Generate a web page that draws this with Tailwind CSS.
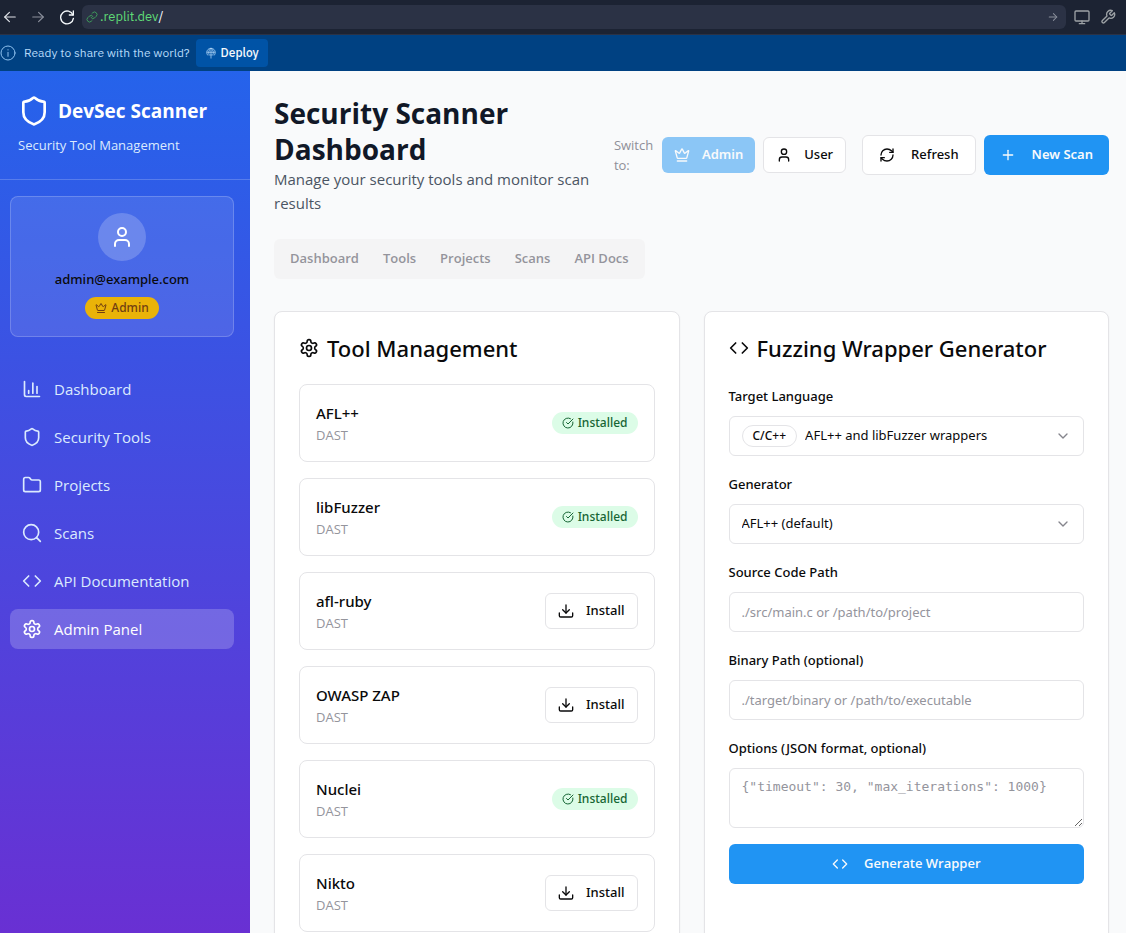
<!DOCTYPE html>
<html lang="en">
<head>
<meta charset="utf-8">
<meta name="viewport" content="width=device-width, initial-scale=1">
<title>DevSec Scanner</title>
<script src="https://cdn.jsdelivr.net/npm/@tailwindcss/browser@4"></script>
</head>
<body class="flex h-screen flex-col overflow-hidden bg-[#f9fafb] font-['Open_Sans','Noto_Sans',sans-serif] text-[#0a0a0b]">

<svg class="hidden" aria-hidden="true">
  <symbol id="i-shield" viewBox="0 0 24 24"><path d="M20 13c0 5-3.5 7.5-7.66 8.95a1 1 0 0 1-.67-.01C7.5 20.5 4 18 4 13V6a1 1 0 0 1 1-1c2 0 4.5-1.2 6.24-2.72a1.17 1.17 0 0 1 1.52 0C14.51 3.81 17 5 19 5a1 1 0 0 1 1 1z"/></symbol>
  <symbol id="i-user" viewBox="0 0 24 24"><path d="M19 21v-2a4 4 0 0 0-4-4H9a4 4 0 0 0-4 4v2"/><circle cx="12" cy="7" r="4"/></symbol>
  <symbol id="i-crown" viewBox="0 0 24 24"><path d="M11.562 3.266a.5.5 0 0 1 .876 0L15.39 8.87a1 1 0 0 0 1.516.294L21.183 5.5a.5.5 0 0 1 .798.519l-2.834 10.246a1 1 0 0 1-.956.734H5.81a1 1 0 0 1-.957-.734L2.02 6.02a.5.5 0 0 1 .798-.519l4.276 3.664a1 1 0 0 0 1.516-.294z"/><path d="M5 21h14"/></symbol>
  <symbol id="i-chart" viewBox="0 0 24 24"><path d="M3 3v16a2 2 0 0 0 2 2h16"/><path d="M18 17V9"/><path d="M13 17V5"/><path d="M8 17v-3"/></symbol>
  <symbol id="i-folder" viewBox="0 0 24 24"><path d="M20 20a2 2 0 0 0 2-2V8a2 2 0 0 0-2-2h-7.9a2 2 0 0 1-1.69-.9L9.6 3.9A2 2 0 0 0 7.93 3H4a2 2 0 0 0-2 2v13a2 2 0 0 0 2 2Z"/></symbol>
  <symbol id="i-search" viewBox="0 0 24 24"><circle cx="11" cy="11" r="9"/><path d="m22 22-4.5-4.5"/></symbol>
  <symbol id="i-code" viewBox="0 0 24 24"><path d="m16 18 6-6-6-6"/><path d="m8 6-6 6 6 6"/></symbol>
  <symbol id="i-gear" viewBox="0 0 24 24"><path d="M12.22 2h-.44a2 2 0 0 0-2 2v.18a2 2 0 0 1-1 1.73l-.43.25a2 2 0 0 1-2 0l-.15-.08a2 2 0 0 0-2.73.73l-.22.38a2 2 0 0 0 .73 2.73l.15.1a2 2 0 0 1 1 1.72v.51a2 2 0 0 1-1 1.74l-.15.09a2 2 0 0 0-.73 2.73l.22.38a2 2 0 0 0 2.73.73l.15-.08a2 2 0 0 1 2 0l.43.25a2 2 0 0 1 1 1.73V20a2 2 0 0 0 2 2h.44a2 2 0 0 0 2-2v-.18a2 2 0 0 1 1-1.73l.43-.25a2 2 0 0 1 2 0l.15.08a2 2 0 0 0 2.73-.73l.22-.39a2 2 0 0 0-.73-2.73l-.15-.08a2 2 0 0 1-1-1.74v-.5a2 2 0 0 1 1-1.74l.15-.09a2 2 0 0 0 .73-2.73l-.22-.38a2 2 0 0 0-2.73-.73l-.15.08a2 2 0 0 1-2 0l-.43-.25a2 2 0 0 1-1-1.73V4a2 2 0 0 0-2-2z"/><circle cx="12" cy="12" r="3"/></symbol>
  <symbol id="i-refresh" viewBox="0 0 24 24"><path d="M3 12a9 9 0 0 1 9-9 9.75 9.75 0 0 1 6.74 2.74L21 8"/><path d="M21 3v5h-5"/><path d="M21 12a9 9 0 0 1-9 9 9.75 9.75 0 0 1-6.74-2.74L3 16"/><path d="M8 16H3v5"/></symbol>
  <symbol id="i-plus" viewBox="0 0 24 24"><path d="M5 12h14"/><path d="M12 5v14"/></symbol>
  <symbol id="i-download" viewBox="0 0 24 24"><path d="M22 15v4a2 2 0 0 1-2 2H4a2 2 0 0 1-2-2v-4"/><path d="m7 10 5 5 5-5"/><path d="M12 15V3"/></symbol>
  <symbol id="i-check" viewBox="0 0 24 24"><path d="M21.8 10A10 10 0 1 1 17 3.335"/><path d="m9 11 3 3L22 4"/></symbol>
  <symbol id="i-chevron" viewBox="0 0 24 24"><path d="m6 9 6 6 6-6"/></symbol>
  <symbol id="i-left" viewBox="0 0 24 24"><path d="M21 12H3"/><path d="m11 4-8 8 8 8"/></symbol>
  <symbol id="i-right" viewBox="0 0 24 24"><path d="M3 12h18"/><path d="m13 4 8 8-8 8"/></symbol>
  <symbol id="i-reload" viewBox="0 0 24 24"><path d="M21.5 3v6h-6"/><path d="M21 9a9.600 9.600 0 1 0 .6 5"/></symbol>
  <symbol id="i-link" viewBox="0 0 24 24"><path d="M10 13a5 5 0 0 0 7.540.54l3-3a5 5 0 0 0-7.070-7.070l-1.720 1.710"/><path d="M14 11a5 5 0 0 0-7.540-.54l-3 3a5 5 0 0 0 7.070 7.070l1.710-1.710"/></symbol>
  <symbol id="i-monitor" viewBox="0 0 24 24"><rect x="1.500" y="3" width="21" height="15" rx="1.500"/><path d="M8 22h8M12 18v4"/></symbol>
  <symbol id="i-wrench" viewBox="0 0 24 24"><path d="M14.700 6.300a1 1 0 0 0 0 1.400l1.600 1.600a1 1 0 0 0 1.400 0l3.770-3.770a6 6 0 0 1-7.940 7.940l-6.910 6.910a2.120 2.120 0 0 1-3-3l6.910-6.910a6 6 0 0 1 7.940-7.940z"/></symbol>
  <symbol id="i-info" viewBox="0 0 24 24"><circle cx="12" cy="12" r="10.500"/><path d="M12 11v6M12 7v.5"/></symbol>
  <symbol id="i-deploy" viewBox="0 0 24 24"><path d="M6 17a8.500 8.500 0 1 1 12 0"/><path d="M3.500 10.500h17M12 2v21M9.500 17.500 12 15l2.500 2.500M8.500 16c-2-4.500-1.500-9.500 3.500-14 5 4.500 5.500 9.500 3.500 14"/></symbol>
</svg>

<!-- Preview toolbar -->
<header class="flex h-[35px] shrink-0 items-center border-b border-[#2b3245] bg-[#1c2333] pr-2.5 pl-[3px] font-['IBM_Plex_Sans',Roboto,sans-serif]">
  <button aria-label="Back" class="mr-3.5 text-[#dfe2e8]"><svg class="size-3.5 fill-none stroke-current stroke-2 [stroke-linecap:round] [stroke-linejoin:round]"><use href="#i-left"/></svg></button>
  <button aria-label="Forward" class="mr-3.5 text-[#8b909c]"><svg class="size-3.5 fill-none stroke-current stroke-2 [stroke-linecap:round] [stroke-linejoin:round]"><use href="#i-right"/></svg></button>
  <button aria-label="Reload" class="mr-[7px] text-[#f5f9fc]"><svg class="size-4 fill-none stroke-current stroke-2 [stroke-linecap:round] [stroke-linejoin:round]"><use href="#i-reload"/></svg></button>
  <div class="flex h-6 flex-1 items-center rounded-md bg-[#2b3245] pr-2 pl-1">
    <svg class="mr-0.5 size-3 fill-none stroke-[#3f9a5b] stroke-2 [stroke-linecap:round] [stroke-linejoin:round]"><use href="#i-link"/></svg>
    <span class="flex-1 text-[13px] text-[#f5f9fc]"><span class="text-[#5fdb76]">.replit.dev</span>/</span>
    <button aria-label="Go" class="text-[#8b909c]"><svg class="size-2.5 fill-none stroke-current stroke-[2.5] [stroke-linecap:round] [stroke-linejoin:round]"><use href="#i-right"/></svg></button>
  </div>
  <button aria-label="Devices" class="ml-2 text-[#9da2a6]"><svg class="size-4 fill-none stroke-current stroke-2 [stroke-linecap:round] [stroke-linejoin:round]"><use href="#i-monitor"/></svg></button>
  <button aria-label="Developer tools" class="ml-2.5 text-[#9da2a6]"><svg class="size-4 fill-none stroke-current stroke-2 [stroke-linecap:round] [stroke-linejoin:round]"><use href="#i-wrench"/></svg></button>
</header>

<!-- Deploy banner -->
<div class="flex h-9 shrink-0 items-center bg-[#004182] font-['IBM_Plex_Sans',Inter,sans-serif] text-xs">
  <svg class="mr-2 size-4 fill-none stroke-[#8fc1ef] stroke-[1.5] [stroke-linecap:round] [stroke-linejoin:round]"><use href="#i-info"/></svg>
  <span class="mr-1.5 text-[#b5d9f9]">Ready to share with the world?</span>
  <button class="flex h-7 items-center gap-1 rounded-sm bg-[#0053a6] px-[9px] font-medium text-[#f5f9fc]">
    <svg class="size-3 fill-none stroke-[#b5d9f9] stroke-[1.5]"><use href="#i-deploy"/></svg>Deploy
  </button>
</div>

<div class="flex min-h-0 flex-1">
  <!-- Sidebar -->
  <aside class="flex w-[250px] shrink-0 flex-col bg-linear-to-b/srgb from-[#2563eb] to-[#6930d3] text-[#dbeafe]">
    <div class="border-b border-white/20 py-6 pl-[18px]">
      <div class="flex items-center gap-2 text-white">
        <svg class="size-8 fill-none stroke-current stroke-2 [stroke-linecap:round] [stroke-linejoin:round]"><use href="#i-shield"/></svg>
        <span class="text-[19px] leading-8 font-bold">DevSec Scanner</span>
      </div>
      <p class="mt-2 text-[13px] leading-5">Security Tool Management</p>
    </div>

    <div class="mt-4 mr-4 ml-2.5 flex flex-col items-center rounded-lg border border-white/20 bg-white/10 px-4 pt-4 pb-[17px]">
      <div class="flex size-12 items-center justify-center rounded-full bg-white/20 text-white">
        <svg class="size-6 fill-none stroke-current stroke-2 [stroke-linecap:round] [stroke-linejoin:round]"><use href="#i-user"/></svg>
      </div>
      <p class="mt-2 font-['Noto_Sans',sans-serif] text-[13px] leading-5 font-medium text-[#0a0a0b]">admin@example.com</p>
      <span class="mt-2 flex h-[22px] items-center gap-1 rounded-full bg-[#eab308] px-2.5 font-['Noto_Sans',sans-serif] text-xs font-medium text-[#713f12]">
        <svg class="size-3 fill-none stroke-current stroke-2 [stroke-linecap:round] [stroke-linejoin:round]"><use href="#i-crown"/></svg>Admin
      </span>
    </div>

    <nav class="mt-8 mr-4 ml-2.5 flex flex-col gap-2 text-[15px]">
      <a href="#" class="flex h-10 items-center gap-3 rounded-lg px-3"><svg class="size-5 fill-none stroke-current stroke-2 [stroke-linecap:round] [stroke-linejoin:round]"><use href="#i-chart"/></svg>Dashboard</a>
      <a href="#" class="flex h-10 items-center gap-3 rounded-lg px-3"><svg class="size-5 fill-none stroke-current stroke-2 [stroke-linecap:round] [stroke-linejoin:round]"><use href="#i-shield"/></svg>Security Tools</a>
      <a href="#" class="flex h-10 items-center gap-3 rounded-lg px-3"><svg class="size-5 fill-none stroke-current stroke-2 [stroke-linecap:round] [stroke-linejoin:round]"><use href="#i-folder"/></svg>Projects</a>
      <a href="#" class="flex h-10 items-center gap-3 rounded-lg px-3"><svg class="size-5 fill-none stroke-current stroke-2 [stroke-linecap:round] [stroke-linejoin:round]"><use href="#i-search"/></svg>Scans</a>
      <a href="#" class="flex h-10 items-center gap-3 rounded-lg px-3"><svg class="size-5 fill-none stroke-current stroke-2 [stroke-linecap:round] [stroke-linejoin:round]"><use href="#i-code"/></svg>API Documentation</a>
      <a href="#" aria-current="page" class="flex h-10 items-center gap-3 rounded-lg bg-white/20 px-3 text-white"><svg class="size-5 fill-none stroke-current stroke-2 [stroke-linecap:round] [stroke-linejoin:round]"><use href="#i-gear"/></svg>Admin Panel</a>
    </nav>
  </aside>

  <main class="min-w-0 flex-1 overflow-y-auto pt-6 pr-[17px] pl-6 [scrollbar-width:none]">
    <div class="flex items-center justify-between gap-4">
      <div class="min-w-0 flex-1">
        <h1 class="text-[28px] leading-9 font-bold text-[#111827]">Security Scanner Dashboard</h1>
        <p class="text-[15px] leading-6 text-[#4b5563]">Manage your security tools and monitor scan results</p>
      </div>
      <div class="flex shrink-0 items-center gap-4">
        <div class="flex items-center gap-2 text-[13px]">
          <span class="w-10 leading-5 text-[#8f8f98]">Switch to:</span>
          <button disabled class="flex h-9 items-center gap-3 rounded-md bg-[#2094f3] px-3 font-['Noto_Sans',sans-serif] font-semibold text-[#f8fafc] opacity-50"><svg class="size-4 fill-none stroke-current stroke-2 [stroke-linecap:round] [stroke-linejoin:round]"><use href="#i-crown"/></svg>Admin</button>
          <button class="flex h-9 items-center gap-3 rounded-md border border-[#e4e4e7] bg-white px-3 font-['Noto_Sans',sans-serif] font-medium"><svg class="size-4 fill-none stroke-current stroke-2 [stroke-linecap:round] [stroke-linejoin:round]"><use href="#i-user"/></svg>User</button>
        </div>
        <div class="flex items-center gap-2 font-['Noto_Sans',sans-serif] text-[13px]">
          <button class="flex h-10 items-center gap-4 rounded-md border border-[#e4e4e7] bg-white px-4 font-medium"><svg class="size-4 fill-none stroke-current stroke-2 [stroke-linecap:round] [stroke-linejoin:round]"><use href="#i-refresh"/></svg>Refresh</button>
          <button class="flex h-10 items-center gap-4 rounded-md bg-[#2094f3] px-4 font-semibold text-[#f8fafc]"><svg class="size-4 fill-none stroke-current stroke-2 [stroke-linecap:round] [stroke-linejoin:round]"><use href="#i-plus"/></svg>New Scan</button>
        </div>
      </div>
    </div>

    <div role="tablist" class="mt-6 inline-flex h-10 items-center rounded-md bg-[#f4f4f5] p-1 text-[13px] font-semibold text-[#94949c]">
      <button role="tab" class="h-8 px-3">Dashboard</button>
      <button role="tab" class="h-8 px-3">Tools</button>
      <button role="tab" class="h-8 px-3">Projects</button>
      <button role="tab" class="h-8 px-3">Scans</button>
      <button role="tab" class="h-8 px-3">API Docs</button>
    </div>

    <div class="mt-8 grid grid-cols-2 gap-6">
      <section class="rounded-lg border border-[#e4e4e7] bg-white p-6 shadow-xs">
        <h2 class="flex h-6 items-center gap-2 font-['Noto_Sans',sans-serif] text-[22px] leading-6 font-medium"><svg class="size-5 fill-none stroke-current stroke-2 [stroke-linecap:round] [stroke-linejoin:round]"><use href="#i-gear"/></svg>Tool Management</h2>
        <ul id="tools" class="mt-6 flex flex-col gap-4"></ul>
      </section>

      <section class="rounded-lg border border-[#e4e4e7] bg-white p-6 shadow-xs">
        <h2 class="flex h-6 items-center gap-2 font-['Noto_Sans',sans-serif] text-[22px] leading-6 font-medium"><svg class="size-5 fill-none stroke-current stroke-2 [stroke-linecap:round] [stroke-linejoin:round]"><use href="#i-code"/></svg>Fuzzing Wrapper Generator</h2>
        <form class="mt-6 flex flex-col gap-4 text-[13px]">
          <div class="flex flex-col gap-2">
            <label for="lang" class="font-['Noto_Sans',sans-serif] leading-6 font-medium">Target Language</label>
            <div class="relative flex h-10 items-center rounded-md border border-[#e4e4e7] px-3">
              <span class="mr-2 flex h-[22px] items-center rounded-full border border-[#e4e4e7] px-2.5 font-['Noto_Sans',sans-serif] text-xs font-medium">C/C++</span>
              <select id="lang" class="h-full min-w-0 flex-1 appearance-none font-['Noto_Sans',sans-serif]"><option>AFL++ and libFuzzer wrappers</option></select>
              <svg class="pointer-events-none absolute right-3 size-4 fill-none stroke-[#85858c] stroke-2 [stroke-linecap:round] [stroke-linejoin:round]"><use href="#i-chevron"/></svg>
            </div>
          </div>
          <div class="flex flex-col gap-2">
            <label for="gen" class="font-['Noto_Sans',sans-serif] leading-6 font-medium">Generator</label>
            <div class="relative flex h-10 items-center rounded-md border border-[#e4e4e7] px-3">
              <select id="gen" class="h-full min-w-0 flex-1 appearance-none font-['Noto_Sans',sans-serif]"><option>AFL++ (default)</option></select>
              <svg class="pointer-events-none absolute right-3 size-4 fill-none stroke-[#85858c] stroke-2 [stroke-linecap:round] [stroke-linejoin:round]"><use href="#i-chevron"/></svg>
            </div>
          </div>
          <div class="flex flex-col gap-2">
            <label for="src" class="font-['Noto_Sans',sans-serif] leading-6 font-medium">Source Code Path</label>
            <input id="src" type="text" placeholder="./src/main.c or /path/to/project" class="h-10 rounded-md border border-[#e4e4e7] px-3 font-['Noto_Sans',sans-serif] placeholder:text-[#94949c]">
          </div>
          <div class="flex flex-col gap-2">
            <label for="bin" class="font-['Noto_Sans',sans-serif] leading-6 font-medium">Binary Path (optional)</label>
            <input id="bin" type="text" placeholder="./target/binary or /path/to/executable" class="h-10 rounded-md border border-[#e4e4e7] px-3 font-['Noto_Sans',sans-serif] placeholder:text-[#94949c]">
          </div>
          <div class="flex flex-col gap-2">
            <label for="opts" class="font-['Noto_Sans',sans-serif] leading-6 font-medium">Options (JSON format, optional)</label>
            <textarea id="opts" placeholder='{"timeout": 30, "max_iterations": 1000}' class="h-[60px] rounded-md border border-[#e4e4e7] px-3 py-2 font-['DejaVu_Sans_Mono',monospace] leading-5 placeholder:text-[#94949c]"></textarea>
          </div>
          <button type="button" class="flex h-10 items-center justify-center gap-4 rounded-md bg-[#2094f3] font-semibold text-[#f8fafc]"><svg class="size-4 fill-none stroke-current stroke-2 [stroke-linecap:round] [stroke-linejoin:round]"><use href="#i-code"/></svg>Generate Wrapper</button>
        </form>
      </section>
    </div>
  </main>
</div>

<script>
const tools = [["AFL++", true], ["libFuzzer", true], ["afl-ruby", false], ["OWASP ZAP", false], ["Nuclei", true], ["Nikto", false]];
const installed = `<span class="flex h-[22px] items-center gap-1 rounded-full bg-[#dcfce7] px-2.5 font-['Noto_Sans',sans-serif] text-xs font-medium text-[#166534]"><svg class="size-3 fill-none stroke-current stroke-2 [stroke-linecap:round] [stroke-linejoin:round]"><use href="#i-check"/></svg>Installed</span>`;
const install = `<button class="flex h-9 items-center gap-3 rounded-md border border-[#e4e4e7] bg-white px-3 font-['Noto_Sans',sans-serif] text-[13px] font-medium"><svg class="size-4 fill-none stroke-current stroke-2 [stroke-linecap:round] [stroke-linejoin:round]"><use href="#i-download"/></svg>Install</button>`;
document.getElementById("tools").innerHTML = tools.map(([name, ok]) =>
  `<li class="flex items-center justify-between rounded-lg border border-[#e4e4e7] p-4"><div><h3 class="font-['Noto_Sans',sans-serif] text-[15px] leading-6 font-medium">${name}</h3><p class="text-[13px] leading-5 text-[#94949c]">DAST</p></div>${ok ? installed : install}</li>`).join("");
</script>
</body>
</html>
